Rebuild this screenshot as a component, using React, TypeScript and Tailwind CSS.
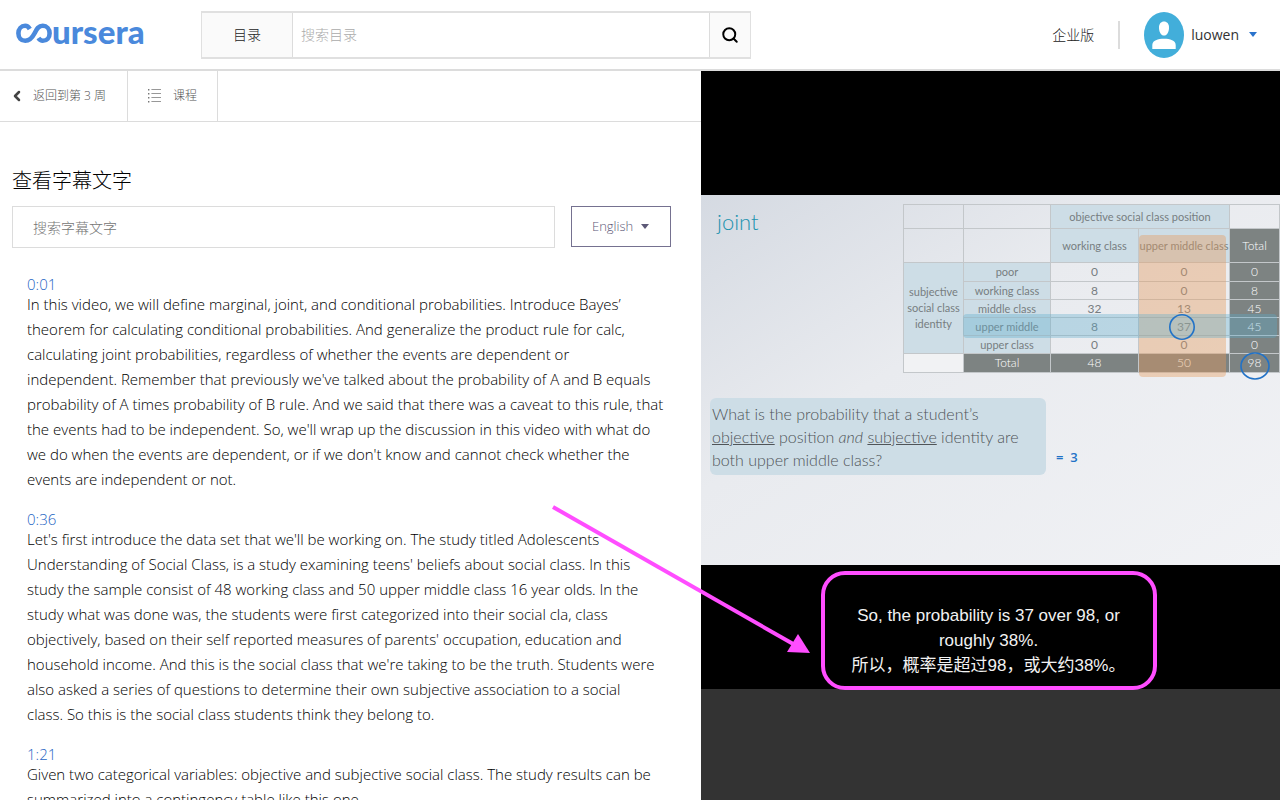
import { ChevronLeft, Search } from "lucide-react";

const transcript = [
  {
    time: "0:01",
    text: `In this video, we will define marginal, joint, and conditional probabilities. Introduce Bayes’
theorem for calculating conditional probabilities. And generalize the product rule for calc,
calculating joint probabilities, regardless of whether the events are dependent or
independent. Remember that previously we've talked about the probability of A and B equals
probability of A times probability of B rule. And we said that there was a caveat to this rule, that
the events had to be independent. So, we'll wrap up the discussion in this video with what do
we do when the events are dependent, or if we don't know and cannot check whether the
events are independent or not.`,
  },
  {
    time: "0:36",
    text: `Let's first introduce the data set that we'll be working on. The study titled Adolescents
Understanding of Social Class, is a study examining teens' beliefs about social class. In this
study the sample consist of 48 working class and 50 upper middle class 16 year olds. In the
study what was done was, the students were first categorized into their social cla, class
objectively, based on their self reported measures of parents' occupation, education and
household income. And this is the social class that we're taking to be the truth. Students were
also asked a series of questions to determine their own subjective association to a social
class. So this is the social class students think they belong to.`,
  },
  {
    time: "1:21",
    text: `Given two categorical variables: objective and subjective social class. The study results can be
summarized into a contingency table like this one.`,
  },
];

const rows = [
  ["poor", "0", "0", "0"],
  ["working class", "8", "0", "8"],
  ["middle class", "32", "13", "45"],
  ["upper middle", "8", "37", "45"],
  ["upper class", "0", "0", "0"],
];

function Logo() {
  return (
    <a href="#" aria-label="Coursera" className="flex h-10 w-[185px] shrink-0 items-center pb-1 text-[#4a89dc]">
      <svg viewBox="0 0 36 22" className="h-[22px] w-9 shrink-0" fill="none" stroke="currentColor" strokeWidth="4.6">
        <path d="M13.8 7C12.6 4.9 11 3.8 9.2 3.8C5.2 3.8 2.4 7 2.4 11.3C2.4 15.6 5.2 18.8 9.2 18.8C14.6 18.8 16.8 14.8 18.6 11.3C20.4 7.8 22 3.8 26.8 3.8C30.8 3.8 33.6 7 33.6 11.3C33.6 15.6 30.8 18.8 26.8 18.8C25 18.8 23.6 17.8 22.4 16" />
      </svg>
      <span className="pb-1 font-[Lato] text-[33px] leading-8 font-black">ursera</span>
    </a>
  );
}

function Header() {
  return (
    <header className="flex h-[71px] shrink-0 items-center border-b-2 border-[#dcdcdc] pr-[23px] pl-4">
      <Logo />
      <form className="flex h-12 w-[550px] border-x border-y-2 border-[#e0e0e0]">
        <button type="button" className="w-[91px] border-r border-[#dcdcdc] bg-[#fafafa] text-sm text-[#222]">
          目录
        </button>
        <input
          aria-label="搜索目录"
          placeholder="搜索目录"
          className="min-w-0 flex-1 px-2 text-sm outline-none placeholder:text-[#aaa]"
        />
        <button
          type="button"
          aria-label="搜索"
          className="flex w-[41px] items-center justify-center border-l border-[#dcdcdc] bg-[#fafafa] text-black"
        >
          <Search className="size-[18px]" strokeWidth={2.6} />
        </button>
      </form>
      <div className="ml-auto flex items-center">
        <a href="#" className="text-sm text-[#222]">企业版</a>
        <span className="ml-6 h-7 w-0.5 bg-[#dcdcdc]" />
        <button type="button" className="ml-6 flex items-center text-sm text-[#333]">
          <svg viewBox="0 0 40 46" className="h-[46px] w-10">
            <ellipse cx="20" cy="23" rx="20" ry="23" fill="#42aeda" />
            <path d="M15 15.5C15 11.8 17 9.6 20 9.6S25 11.8 25 15.5C25 20 23 23.6 20 23.6S15 20 15 15.5Z" fill="#fff" />
            <path d="M8.3 37V33C8.3 28.5 14 26.8 20 26.8S31.7 28.5 31.7 33V37Z" fill="#fff" />
          </svg>
          <span className="ml-[7px] font-normal">luowen</span>
          <svg viewBox="0 0 8 5" className="ml-2.5 h-[5px] w-2" fill="#2a73cc">
            <path d="M0 0H8L4 5Z" />
          </svg>
        </button>
      </div>
    </header>
  );
}

function SubNav() {
  return (
    <nav className="flex h-[51px] shrink-0 border-b border-[#dcdcdc] text-xs text-[#555]">
      <a href="#" className="flex w-32 items-center border-r border-[#dcdcdc] pl-[9px]">
        <ChevronLeft className="size-4 text-[#444]" strokeWidth={3.8} />
        <span className="ml-2">返回到第 3 周</span>
      </a>
      <a href="#" className="flex w-[90px] items-center border-r border-[#dcdcdc] pl-5">
        <svg viewBox="0 0 13 14" className="h-3.5 w-[13px]" fill="#777">
          <path d="M0 0H1.4V1.4H0ZM0 4H1.4V5.4H0ZM0 8H1.4V9.4H0ZM0 12H1.4V13.4H0Z" />
          <path d="M3.4 .3H13V1H3.4ZM3.4 4.3H13V5H3.4ZM3.4 8.3H13V9H3.4ZM3.4 12.3H13V13H3.4Z" />
        </svg>
        <span className="ml-3">课程</span>
      </a>
    </nav>
  );
}

function Transcript() {
  return (
    <section className="flex min-w-0 flex-col overflow-hidden">
      <SubNav />
      <div className="px-3 pt-11">
        <h1 className="text-xl leading-[30px] text-black">查看字幕文字</h1>
        <div className="mt-2.5 mr-[18px] flex gap-4">
          <input
            aria-label="搜索字幕文字"
            placeholder="搜索字幕文字"
            className="h-[42px] min-w-0 flex-1 border border-[#dcdcdc] px-5 text-sm outline-none placeholder:text-[#757575]"
          />
          <div className="relative">
            <select
              aria-label="字幕语言"
              className="h-[41px] w-[100px] appearance-none border border-[#757190] bg-white pl-5 text-[13px] text-[#5d5977]"
            >
              <option>English</option>
            </select>
            <svg viewBox="0 0 8 5" className="pointer-events-none absolute top-[18px] right-[22px] h-[5px] w-2" fill="#5d5977">
              <path d="M0 0H8L4 5Z" />
            </svg>
          </div>
        </div>
        <div className="mt-7 flex flex-col gap-[19px] pl-[15px] text-[15px]">
          {transcript.map((block) => (
            <div key={block.time}>
              <a href="#" className="block leading-4 text-[#1f66c4]">{block.time}</a>
              <p className="leading-[25px] whitespace-pre text-black">{block.text}</p>
            </div>
          ))}
        </div>
      </div>
    </section>
  );
}

function SlideTable() {
  const line = "border border-[#c3c7ca]";
  const head = "border border-[#c3c7ca] bg-[#cddde6] text-[11px] font-normal whitespace-nowrap";
  const dark = "border border-[#c3c7ca] bg-[#7d8382] text-white";
  return (
    <table className="w-[376px] table-fixed border-collapse text-center text-xs leading-4 font-normal text-[#777d81]">
      <colgroup>
        <col className="w-[60px]" />
        <col className="w-[87px]" />
        <col className="w-[88px]" />
        <col className="w-[91px]" />
        <col className="w-[50px]" />
      </colgroup>
      <tbody>
        <tr className="h-6">
          <td className={line} />
          <td className={line} />
          <th colSpan={2} className={head}>objective social class position</th>
          <td className={line} />
        </tr>
        <tr className="h-[34px]">
          <td className={line} />
          <td className={line} />
          <th className={head}>working class</th>
          <th className={head}>
            <span className="-mx-2">upper middle class</span>
          </th>
          <th className={`${dark} font-light`}>Total</th>
        </tr>
        {rows.map(([label, working, upper, total], i) => (
          <tr key={label} className={i === 0 ? "h-[19px]" : "h-[18px]"}>
            {i === 0 && (
              <th rowSpan={5} className={head}>
                subjective<br />social class<br />identity
              </th>
            )}
            <th className={head}>{label}</th>
            <td className={line}>{working}</td>
            <td className={line}>{upper}</td>
            <td className={`${dark} font-light`}>{total}</td>
          </tr>
        ))}
        <tr className="h-[19px] bg-[#7d8382] font-light text-white">
          <td className={`${line} bg-[#f1f2f4]`} />
          <th className={`${line} font-light`}>Total</th>
          <td className={line}>48</td>
          <td className={line}>50</td>
          <td className={line}>98</td>
        </tr>
      </tbody>
    </table>
  );
}

function Slide() {
  return (
    <div className="h-[370px] overflow-hidden bg-linear-to-br from-[#d5dae2] via-[#e9ebef] via-40% to-[#f1f2f5] font-[Lato] font-light">
      <div className="flex h-[203px] justify-between pt-[9px] pl-4">
        <h2 className="text-[22px] leading-9 text-[#1c93af]">joint</h2>
        <div className="relative h-fit">
          <SlideTable />
          <span className="absolute top-[31px] left-[236px] h-[142px] w-[87px] rounded bg-[#e69a5c]/40" />
          <span className="absolute top-[110px] left-[60px] h-6 w-[314px] rounded bg-[#5cadcb]/35" />
          <svg viewBox="0 0 376 180" className="absolute top-0 left-0 h-[180px] w-[376px]" fill="none" stroke="#2172c7" strokeWidth="1.6">
            <circle cx="279" cy="123" r="12.2" />
            <ellipse cx="352" cy="162" rx="14" ry="13" />
          </svg>
        </div>
      </div>
      <div className="flex items-end pl-[9px]">
        <p className="w-[336px] rounded-md bg-[#cddde6] px-0.5 py-1 text-base leading-[23px] whitespace-nowrap text-[#4f5458]">
          What is the probability that a student’s
          <br />
          <u>objective</u> position <i>and</i> <u>subjective</u> identity are
          <br />
          both upper middle class?
        </p>
        <span className="mb-2 ml-2.5 font-['Open_Sans'] text-[13px] leading-5 font-semibold text-[#2172c7]">=&nbsp; 3</span>
      </div>
    </div>
  );
}

function Video() {
  return (
    <section className="min-w-0 overflow-hidden bg-[#333]">
      <div className="bg-black pt-[124px]">
        <Slide />
        <div className="flex h-[124px] justify-center pt-1.5 pr-1">
          <p className="h-[119px] w-[336px] rounded-3xl border-4 border-[#ff4dff] pt-7 text-center font-['Liberation_Sans','Noto_Sans_CJK_SC',sans-serif] text-[17px] leading-[25px] font-normal text-[#f2f2f2]">
            So, the probability is 37 over 98, or
            <br />
            roughly 38%.
            <br />
            所以，概率是超过98，或大约38%。
          </p>
        </div>
      </div>
    </section>
  );
}

export default function App() {
  return (
    <div className="flex h-screen flex-col overflow-hidden bg-white font-['Open_Sans','Noto_Sans_CJK_SC',sans-serif] font-light">
      <Header />
      <main className="relative grid min-h-0 flex-1 grid-cols-[701fr_579fr]">
        <Transcript />
        <Video />
        <svg
          viewBox="0 0 258 150"
          className="pointer-events-none absolute top-[433px] left-[552px] h-[150px] w-[258px]"
          aria-hidden="true"
        >
          <path d="M1 3L243 141" stroke="#ff4dff" strokeWidth="4" />
          <path d="M246 130L258 149L235 148Z" fill="#ff4dff" />
        </svg>
      </main>
    </div>
  );
}
